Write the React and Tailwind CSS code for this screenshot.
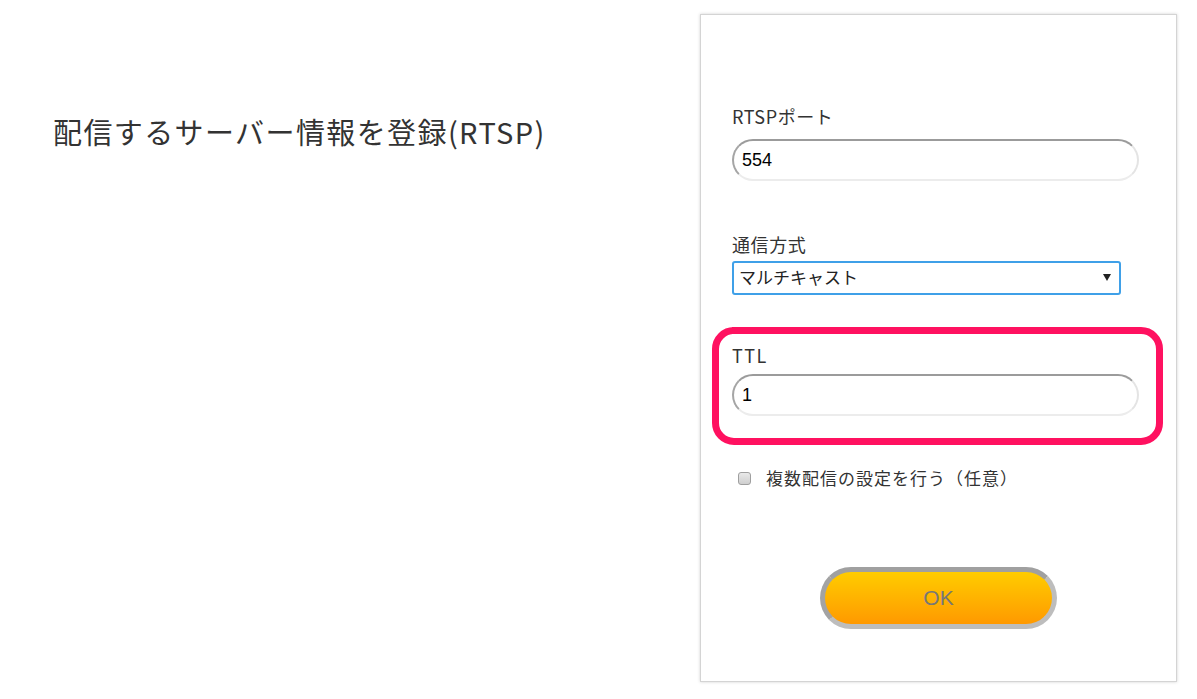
import React, { useState } from 'react';

const jp = '[font-family:"Noto_Sans_CJK_JP","Noto_Sans",sans-serif]';

const RoundInput = ({ value, onChange }) => (
    <input
        value={value}
        onChange={e => onChange(e.target.value)}
        className="block w-full h-[42px] rounded-full border-2 border-t-[#9b9b9b] border-l-[#a5a5a5] border-b-[#ececec] border-r-[#e4e4e4] bg-white pl-[8px] text-[18px] text-black outline-none [font-family:'Liberation_Sans',Arial,sans-serif]"
    />
);

export default function App() {
    const [port, setPort] = useState('554');
    const [ttl, setTtl] = useState('1');
    const [multi, setMulti] = useState(false);

    return (
        <div className={`flex h-[699px] w-[1197px] bg-white text-[#333] ${jp}`}>
            {/* Left heading */}
            <div className="w-[700px] pl-[53px] pt-[111px]">
                <h1 className="text-[29px] font-normal leading-[40px] tracking-[1.4px] text-[#333]">配信するサーバー情報を登録(RTSP)</h1>
            </div>

            {/* Form panel */}
            <div className="mt-[14px] h-[668px] w-[477px] border border-[#d4d4d4] bg-white shadow-[0_0_3px_rgba(0,0,0,0.18)]">
                <div className="pl-[31px] pr-[37px] pt-[89px]">
                    <label className="block text-[18px] leading-[24px] tracking-[0.6px] text-[#333]">RTSPポート</label>
                    <div className="mt-[11px]">
                        <RoundInput value={port} onChange={setPort} />
                    </div>

                    <label className="mt-[51px] block text-[18px] leading-[24px] tracking-[0.6px] text-[#333]">通信方式</label>
                    <div className="relative mt-[5px] mr-[18px]">
                        <select className="block h-[34px] w-full appearance-none rounded-[3px] border-2 border-[#3fa0e8] bg-white pl-[5px] pb-[3px] text-[17px] text-[#222] outline-none">
                            <option>マルチキャスト</option>
                            <option>ユニキャスト</option>
                        </select>
                        <svg className="pointer-events-none absolute right-[10px] top-[13px]" width="8" height="7" viewBox="0 0 8 7">
                            <path d="M0 0 L8 0 L4 7 Z" fill="#222" />
                        </svg>
                    </div>

                    {/* highlighted TTL block */}
                    <div className="mt-[32px] -ml-[20px] -mr-[24px] rounded-[22px] border-[7px] border-[#ff1160] pb-[22px] pl-[13px] pr-[17px] pt-[9px]">
                        <label className="block text-[18px] leading-[24px] tracking-[1.5px] text-[#333]">TTL</label>
                        <div className="mt-[7px]">
                            <RoundInput value={ttl} onChange={setTtl} />
                        </div>
                    </div>

                    <label className="mt-[21px] flex cursor-pointer items-center pl-[6px]" onClick={() => setMulti(!multi)}>
                        <span className={`h-[13px] w-[13px] rounded-[3px] border border-[#9f9f9f] ${multi ? 'bg-[#3fa0e8]' : 'bg-gradient-to-b from-[#e9e9e9] to-[#cfcfcf]'}`}></span>
                        <span className="ml-[15px] text-[17px] leading-[24px] tracking-[1px] text-[#333]">複数配信の設定を行う（任意）</span>
                    </label>
                </div>

                <div className="mt-[77px] flex justify-center">
                    <button className="h-[62px] w-[237px] rounded-full border-[5px] border-t-[#a0a0a0] border-l-[#a3a3a3] border-b-[#bdbdbd] border-r-[#bdbdbd] bg-gradient-to-b from-[#ffcc00] to-[#ff9900] text-[21px] text-[#777] [font-family:'Liberation_Sans',Arial,sans-serif]">
                        OK
                    </button>
                </div>
            </div>
        </div>
    );
}
